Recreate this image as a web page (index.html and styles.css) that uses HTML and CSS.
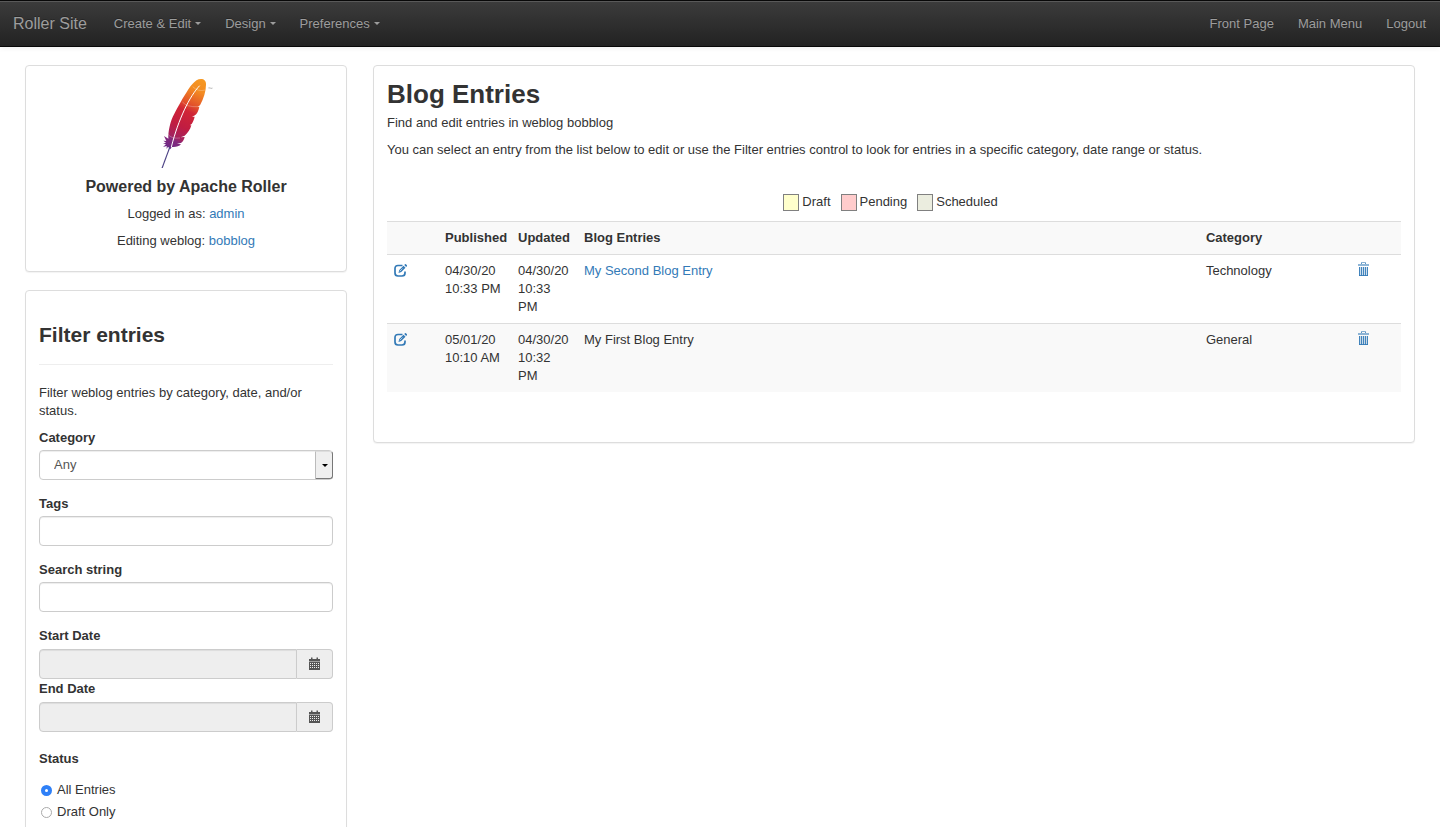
FILE: index.html
```html
<!DOCTYPE html>
<html lang="en">
<head>
<meta charset="utf-8">
<meta name="viewport" content="width=device-width, initial-scale=1">
<title>Blog Entries</title>
<link rel="stylesheet" href="styles.css">
</head>
<body>
<svg class="symbols" aria-hidden="true">
  <symbol id="icon-edit" viewBox="0 0 26 26">
    <path d="M17 3H8Q2 3 2 9v9q0 6 6 6h8q6 0 6-6v-3" fill="none" stroke="currentColor" stroke-width="3.4"/>
    <path d="M9 18l1.500-6L19 3.500l4 4L14.500 16z" fill="currentColor"/>
    <path d="M20.500 2l1.500-1.500q1-.8 2 0l1.800 1.800q.8 1 0 2L24.300 6z" fill="currentColor"/>
    <path d="M11.500 14.500l5.500-5.500" stroke="#fff" stroke-width="1.200"/>
  </symbol>
  <symbol id="icon-trash" viewBox="0 0 22 28">
    <path d="M7 4V2q0-1.500 1.500-1.500h5Q15 .5 15 2v2" fill="none" stroke="currentColor" stroke-width="2" opacity=".8"/>
    <path d="M0 4h22v4H0z" fill="currentColor" opacity=".55"/>
    <path d="M2 10h18v18H2z" fill="currentColor" opacity=".25"/>
    <path d="M3 10v18M7 10v18M11 10v18M15 10v18M19 10v18M2 27h18" fill="none" stroke="currentColor" stroke-width="2" opacity=".9"/>
  </symbol>
  <symbol id="icon-calendar" viewBox="0 0 22 28">
    <path d="M4 1h3v3h8V1h3v3h4v4H0V4h4z" fill="currentColor"/>
    <path d="M0 8h22v2H0z" fill="currentColor" opacity=".5"/>
    <path d="M0 10h22v16H0z" fill="currentColor"/>
    <path d="M2 13h18M2 17h18M2 21h18" stroke="#eee" stroke-width="2" stroke-dasharray="2 2"/>
  </symbol>
</svg>

<nav class="navbar">
  <a class="brand" href="#">Roller Site</a>
  <div class="nav-group">
    <a class="nav-link" href="#">Create &amp; Edit<span class="caret"></span></a>
    <a class="nav-link" href="#">Design<span class="caret"></span></a>
    <a class="nav-link" href="#">Preferences<span class="caret"></span></a>
  </div>
  <div class="nav-group nav-end">
    <a class="nav-link" href="#">Front Page</a>
    <a class="nav-link" href="#">Main Menu</a>
    <a class="nav-link" href="#">Logout</a>
  </div>
</nav>

<main class="page">
  <aside class="sidebar">
    <section class="panel about">
      <svg class="feather" viewBox="3 39 270 267" aria-hidden="true">
        <defs>
          <linearGradient id="plume" gradientUnits="userSpaceOnUse" x1="186" y1="40" x2="88" y2="246">
            <stop offset="0" stop-color="#f69923"/>
            <stop offset=".16" stop-color="#f38b22"/>
            <stop offset=".36" stop-color="#e2512a"/>
            <stop offset=".46" stop-color="#d02536"/>
            <stop offset=".68" stop-color="#c01c42"/>
            <stop offset=".84" stop-color="#a3235f"/>
            <stop offset=".88" stop-color="#85297c"/>
            <stop offset="1" stop-color="#6d2a85"/>
          </linearGradient>
        </defs>
        <path fill="url(#plume)" d="M183 39C192 39 199 45 198 56C198 76 191 98 180 118L173 122L178 122C176 134 171 143 165 148L156 152L164 152C162 162 158 169 155 174L149 178L154 178C151 190 143 202 134 209L122 214L134 213C132 222 128 229 122 231L111 233L123 235C117 242 107 244 95 243L91 250L84 242L80 249L80 240L69 243L78 235L69 233L78 230L70 224L79 225L72 210L85 218C84 196 91 164 103 143C112 127 126 100 134 88C150 62 164 39 183 39Z"/>
        <path d="M90 242L66 307" fill="none" stroke="#4c4285" stroke-width="3.500"/>
        <path d="M179 59C149 90 115 160 94 243" fill="none" stroke="#fff" stroke-width="3"/>
        <path d="M158 62Q174 78 196 72M127 107Q137 124 176 122M84 205Q94 219 120 216" fill="none" stroke="#fff" stroke-width="1.500" opacity=".5"/>
        <path d="M205 65h5M207.500 65v4M212 69v-4l2 3 2-3v4" fill="none" stroke="#999" stroke-width="1.200"/>
      </svg>
      <h4 class="about-title">Powered by Apache Roller</h4>
      <p class="text">Logged in as: <a href="#">admin</a></p>
      <p class="text">Editing weblog: <a href="#">bobblog</a></p>
    </section>

    <form class="panel filter">
      <h3 class="filter-title">Filter entries</h3>
      <hr class="rule">
      <p class="text">Filter weblog entries by category, date, and/or status.</p>
      <div class="field">
        <label for="category">Category</label>
        <div class="select-box">
          <select id="category" class="control"><option>Any</option></select>
        </div>
      </div>
      <div class="field">
        <label for="tags">Tags</label>
        <input id="tags" class="control" type="text">
      </div>
      <div class="field">
        <label for="search">Search string</label>
        <input id="search" class="control" type="text">
      </div>
      <div class="date-field">
        <label for="start">Start Date</label>
        <div class="date-box">
          <input id="start" class="control" type="text" readonly>
          <button class="date-button" type="button" aria-label="Choose start date"><svg class="icon-calendar"><use href="#icon-calendar"/></svg></button>
        </div>
      </div>
      <div class="date-field">
        <label for="end">End Date</label>
        <div class="date-box">
          <input id="end" class="control" type="text" readonly>
          <button class="date-button" type="button" aria-label="Choose end date"><svg class="icon-calendar"><use href="#icon-calendar"/></svg></button>
        </div>
      </div>
      <fieldset class="status">
        <legend>Status</legend>
        <label class="choice"><input type="radio" name="status" checked>All Entries</label>
        <label class="choice"><input type="radio" name="status">Draft Only</label>
      </fieldset>
    </form>
  </aside>

  <section class="panel entries">
    <h2 class="entries-title">Blog Entries</h2>
    <p class="text">Find and edit entries in weblog bobblog</p>
    <p class="text">You can select an entry from the list below to edit or use the Filter entries control to look for entries in a specific category, date range or status.</p>
    <div class="key">
      <span class="key-item"><span class="swatch draft"></span>Draft</span>
      <span class="key-item"><span class="swatch pending"></span>Pending</span>
      <span class="key-item"><span class="swatch scheduled"></span>Scheduled</span>
    </div>
    <table class="entry-table">
      <colgroup>
        <col class="col-edit"><col class="col-published"><col class="col-updated"><col><col class="col-category"><col class="col-delete">
      </colgroup>
      <thead>
        <tr><th></th><th>Published</th><th>Updated</th><th>Blog Entries</th><th>Category</th><th></th></tr>
      </thead>
      <tbody>
        <tr>
          <td><a href="#" aria-label="Edit"><svg class="icon-edit"><use href="#icon-edit"/></svg></a></td>
          <td>04/30/20 10:33 PM</td>
          <td>04/30/20 10:33 PM</td>
          <td><a href="#">My Second Blog Entry</a></td>
          <td>Technology</td>
          <td><a href="#" aria-label="Delete"><svg class="icon-trash"><use href="#icon-trash"/></svg></a></td>
        </tr>
        <tr>
          <td><a href="#" aria-label="Edit"><svg class="icon-edit"><use href="#icon-edit"/></svg></a></td>
          <td>05/01/20 10:10 AM</td>
          <td>04/30/20 10:32 PM</td>
          <td>My First Blog Entry</td>
          <td>General</td>
          <td><a href="#" aria-label="Delete"><svg class="icon-trash"><use href="#icon-trash"/></svg></a></td>
        </tr>
      </tbody>
    </table>
  </section>
</main>
</body>
</html>
```
FILE: styles.css
```css
* { box-sizing: border-box; }

body {
  display: flex;
  flex-direction: column;
  height: 100vh;
  margin: 0;
  background: #fff;
  color: #333;
  font: 13px/18px "Liberation Sans", Arial, sans-serif;
}

a { color: #337ab7; text-decoration: none; }

h2, h3, h4 { margin: 0; font-weight: bold; }

.symbols { position: absolute; width: 0; height: 0; }

/* Top bar */
.navbar {
  display: flex;
  flex: none;
  align-items: center;
  height: 47px;
  padding: 0 2px 0 13px;
  border: solid #080808;
  border-width: 1px 0;
  background: linear-gradient(#3c3c3c, #222);
  box-shadow: inset 0 1px 0 rgba(255, 255, 255, .15), 0 1px 5px rgba(0, 0, 0, .075);
  text-shadow: 0 -1px 0 rgba(0, 0, 0, .25);
}

.brand { margin-right: 15px; color: #9d9d9d; font-size: 16px; }

.nav-group { display: flex; }

.nav-end { margin-left: auto; }

.nav-link {
  display: flex;
  align-items: center;
  gap: 4px;
  padding: 13px 12px;
  color: #9d9d9d;
}

.caret {
  border: 3px solid transparent;
  border-top-color: #9d9d9d;
  border-bottom: 0;
}

/* Page */
.page {
  display: grid;
  flex: 1;
  grid-template-columns: minmax(0, 322fr) minmax(0, 1042fr);
  gap: 26px;
  align-items: start;
  min-height: 0;
  padding: 18px 25px 0;
  overflow-y: auto;
  scrollbar-width: none;
}

.sidebar { display: flex; flex-direction: column; gap: 18px; }

.panel {
  padding: 13px;
  border: 1px solid #ddd;
  border-radius: 4px;
  background: #fff;
  box-shadow: 0 1px 1px rgba(0, 0, 0, .05);
}

.text { margin: 0 0 9px; }

.about { padding-bottom: 12px; text-align: center; }

.feather { display: block; width: 90px; height: 89px; margin: 0 auto 10px; }

.about-title { margin-bottom: 9px; font-size: 16px; line-height: 18px; }

/* Filter form */
.filter { padding-bottom: 36px; }

.filter-title { margin-top: 19px; font-size: 21px; line-height: 24px; }

.rule { margin: 17px 0 19px; border: 0; border-top: 1px solid #eee; }

.field { margin-bottom: 15px; }

.field > label,
.date-field > label {
  display: block;
  margin-bottom: 3px;
  font-weight: bold;
}

.date-field { margin-bottom: 1px; }

.date-field > label { margin-bottom: 4px; }

.control {
  display: block;
  width: 100%;
  height: 30px;
  padding: 4px 11px;
  border: 1px solid #ccc;
  border-radius: 4px;
  background: #fff;
  box-shadow: inset 0 1px 1px rgba(0, 0, 0, .075);
  color: #555;
  font: inherit;
  appearance: none;
}

.select-box { position: relative; }

.select-box .control { padding-left: 14px; }

.select-box::before {
  content: "";
  position: absolute;
  top: 1px;
  right: 0;
  bottom: 1px;
  width: 16px;
  border: 1px solid #777;
  border-top-color: #ddd;
  border-left-color: #bbb;
  border-radius: 0 3px 3px 0;
  background: #efefef;
  pointer-events: none;
}

.select-box::after {
  content: "";
  position: absolute;
  top: 14px;
  right: 5px;
  border: 3px solid transparent;
  border-top-color: #000;
  border-bottom: 0;
  pointer-events: none;
}

.date-box { display: flex; }

.date-box .control {
  flex: 1;
  min-width: 0;
  border-radius: 4px 0 0 4px;
  background: #eee;
}

.date-button {
  display: flex;
  align-items: center;
  justify-content: center;
  width: 36px;
  padding: 0;
  border: 1px solid #ccc;
  border-left: 0;
  border-radius: 0 4px 4px 0;
  background: #eee;
  color: #555;
}

.icon-calendar { width: 11px; height: 14px; }

.status { margin: 18px 0 0; padding: 0; border: 0; }

.status legend { margin-bottom: 13px; padding: 0; font-weight: bold; }

.choice { display: flex; align-items: center; gap: 5px; margin-bottom: 4px; }

.choice input {
  width: 11px;
  height: 11px;
  margin: 0 0 0 2px;
  border: 1px solid #aaa;
  border-radius: 50%;
  background: #fff;
  appearance: none;
}

.choice input:checked { border: 4px solid #2f80f7; }

/* Entries */
.entries { padding-bottom: 50px; }

.entries-title { margin-bottom: 4px; font-size: 26px; line-height: 31px; }

.key {
  display: flex;
  justify-content: center;
  gap: 3px;
  margin: 34px 0 10px;
}

.key-item { display: flex; align-items: center; gap: 3px; margin-right: 7px; }

.swatch { width: 16px; height: 17px; border: 1px solid #808080; }

.draft { background: #ffc; }

.pending { background: #fcc; }

.scheduled { background: #ebeddf; }

.entry-table { width: 100%; border-collapse: collapse; table-layout: fixed; }

.col-edit { width: 51px; }
.col-published { width: 73px; }
.col-updated { width: 66px; }
.col-category { width: 15%; }
.col-delete { width: 50px; }

.entry-table th,
.entry-table td {
  padding: 7px;
  border-top: 1px solid #ddd;
  text-align: left;
  vertical-align: top;
}

.entry-table th { height: 33px; }

.entry-table thead tr,
.entry-table tbody tr:nth-child(even) { background: #f9f9f9; }

.icon-edit { display: block; width: 13px; height: 13px; margin-top: 2px; }

.icon-trash { display: block; width: 11px; height: 14px; }
```
